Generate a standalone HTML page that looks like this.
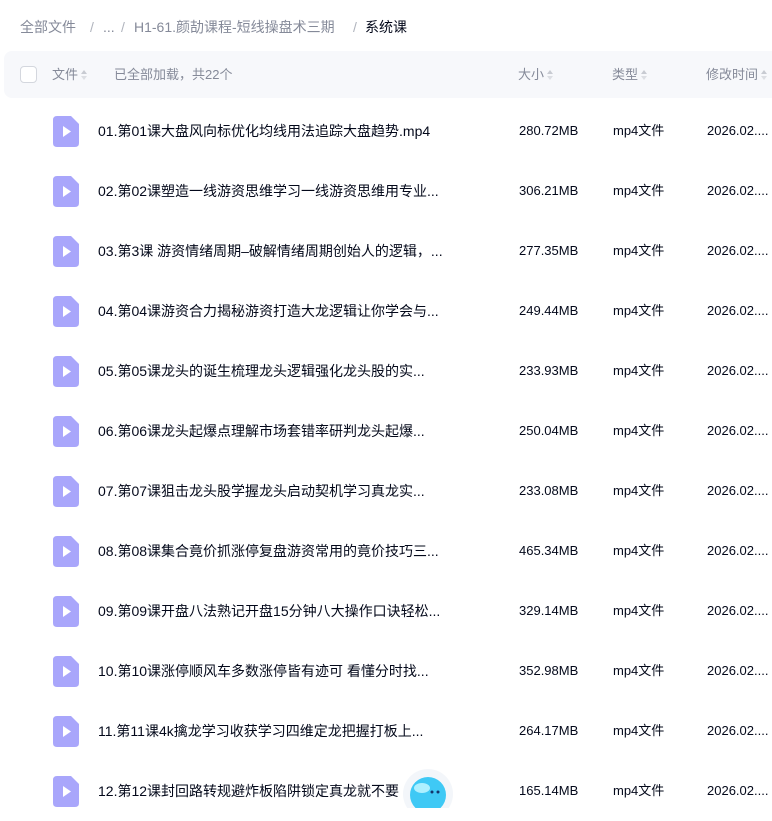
<!DOCTYPE html>
<html><head><meta charset="utf-8"><style>
*{margin:0;padding:0;box-sizing:border-box}
body{width:772px;height:804px;overflow:hidden;background:#fff;font-family:"Liberation Sans","Noto Sans CJK SC",sans-serif;position:relative}
.bc{position:absolute;top:17px;left:20px;font-size:14px;line-height:20px;color:#858a99;white-space:nowrap}
.bc span{position:absolute;top:0}
.hd{position:absolute;left:4px;top:51px;width:780px;height:47px;background:#f7f8fb;border-radius:8px;font-size:13px;color:#858a99}
.hd span{position:absolute;top:14px;line-height:20px;white-space:nowrap}
.cb{position:absolute;left:16px;top:15px;width:17px;height:17px;border:1px solid #d4d7de;border-radius:4px;background:#fff}
.sort{display:inline-block;vertical-align:middle;margin-left:3px;width:6px;height:10px;position:relative;top:-1px}
.sort:before,.sort:after{content:"";position:absolute;left:0;border-left:3px solid transparent;border-right:3px solid transparent}
.sort:before{top:0;border-bottom:4px solid #c8cbd2}
.sort:after{bottom:0;border-top:4px solid #dcdee3}
.row{position:absolute;left:0;width:772px;height:60px;font-size:13px;color:#03081a;line-height:20px}
.row span{position:absolute;top:20px;white-space:nowrap}
.row .ic{position:absolute;left:53px;top:15px}
.row .n{left:98px;font-size:14px}
.row .s{left:519px}
.row .t{left:613px}
.row .d{left:707px}
</style></head><body>
<div class="bc"><span style="left:0">全部文件</span><span style="left:70px;color:#b0b4bd">/</span><span style="left:83px">...</span><span style="left:101px;color:#b0b4bd">/</span><span style="left:114px">H1-61.颜劼课程-短线操盘术三期</span><span style="left:333px;color:#b0b4bd">/</span><span style="left:345px;color:#03081a">系统课</span></div>
<div class="hd"><div class="cb"></div>
<span style="left:48px">文件<i class="sort"></i></span>
<span style="left:110px">已全部加载，共22个</span>
<span style="left:514px">大小<i class="sort"></i></span>
<span style="left:608px">类型<i class="sort"></i></span>
<span style="left:702px">修改时间<i class="sort"></i></span></div>
<div id="rows"></div>
<svg style="position:absolute;left:402px;top:768px" width="52" height="40"><circle cx="26" cy="26" r="25" fill="#f3f6fa"/><circle cx="26" cy="27" r="18" fill="#3fc9f5"/><ellipse cx="20" cy="20" rx="8" ry="5" fill="#aef0ff"/><circle cx="30" cy="24" r="1.5" fill="#14356b"/><circle cx="36" cy="24" r="1.5" fill="#14356b"/></svg>
<script>
var d=[["01.第01课大盘风向标优化均线用法追踪大盘趋势.mp4","280.72MB"],["02.第02课塑造一线游资思维学习一线游资思维用专业...","306.21MB"],["03.第3课 游资情绪周期–破解情绪周期创始人的逻辑，...","277.35MB"],["04.第04课游资合力揭秘游资打造大龙逻辑让你学会与...","249.44MB"],["05.第05课龙头的诞生梳理龙头逻辑强化龙头股的实...","233.93MB"],["06.第06课龙头起爆点理解市场套错率研判龙头起爆...","250.04MB"],["07.第07课狙击龙头股学握龙头启动契机学习真龙实...","233.08MB"],["08.第08课集合竟价抓涨停复盘游资常用的竟价技巧三...","465.34MB"],["09.第09课开盘八法熟记开盘15分钟八大操作口诀轻松...","329.14MB"],["10.第10课涨停顺风车多数涨停皆有迹可 看懂分时找...","352.98MB"],["11.第11课4k擒龙学习收获学习四维定龙把握打板上...","264.17MB"],["12.第12课封回路转规避炸板陷阱锁定真龙就不要","165.14MB"]];
var h="";d.forEach(function(r,i){h+='<div class="row" style="top:'+(101+i*60)+'px"><svg class="ic" width="26" height="31" viewBox="0 0 26 31"><path d="M4 0H18L26 8V27Q26 31 22 31H4Q0 31 0 27V4Q0 0 4 0Z" fill="#a9a6fb"/><path d="M10 10L18 15.5L10 21Z" fill="#fff"/></svg><span class="n">'+r[0]+'</span><span class="s">'+r[1]+'</span><span class="t">mp4文件</span><span class="d">2026.02....</span></div>'});
document.getElementById("rows").innerHTML=h;
</script>
</body></html>
